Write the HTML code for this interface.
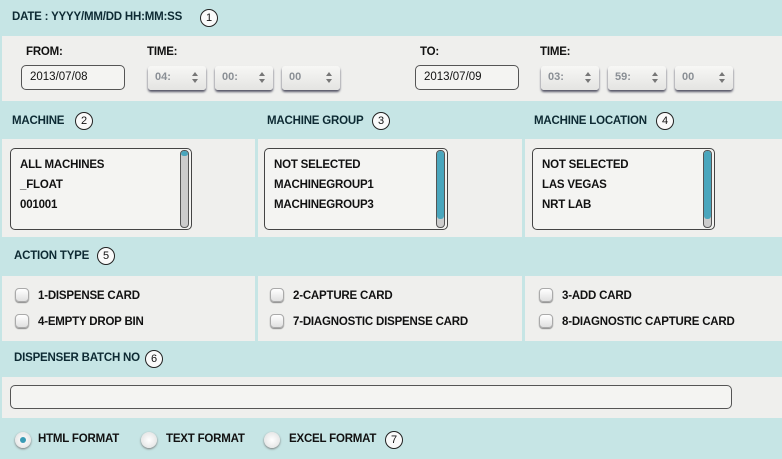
<!DOCTYPE html>
<html><head><style>
*{margin:0;padding:0;box-sizing:border-box}
body{width:782px;height:459px;background:#c6e5e5;position:relative;overflow:hidden;font-family:"Liberation Sans",sans-serif;color:#111}
.a{position:absolute}
.g{position:absolute;background:#efefed}
.h{position:absolute;font-weight:bold;font-size:11.5px;color:#0d2a33;white-space:nowrap;letter-spacing:-0.2px}
.c{position:absolute;width:18px;height:18px;border:1px solid #222;border-radius:50%;background:#fafafa;font-size:11px;text-align:center;line-height:16px;color:#111}
.l{position:absolute;font-weight:bold;font-size:11.5px;color:#111;white-space:nowrap;letter-spacing:-0.2px}
.in{position:absolute;border:1px solid #555;border-radius:5px;background:#f4f4f2;font-size:11.5px;padding-left:8px;line-height:22px}
.sp{position:absolute;width:58px;height:24px;border-radius:3px;background:linear-gradient(#f7f7f5,#e4e4e2);box-shadow:0 2px 2px #556;font-size:11px;font-weight:bold;color:#8a8f95;padding-left:7px;line-height:22px}
.sp:after{content:"";position:absolute;right:8px;top:6px;border:3px solid transparent;border-bottom:4px solid #777;border-top:0}
.sp:before{content:"";position:absolute;right:8px;top:13px;border:3px solid transparent;border-top:4px solid #777;border-bottom:0}
.lb{position:absolute;height:82px;border:1px solid #444;border-radius:5px;background:#f4f4f2;font-size:11.5px;font-weight:bold;padding:6px 0 0 9px;line-height:20px;letter-spacing:-0.2px}
.sb{position:absolute;right:2px;top:1px;width:9px;height:78px;border:1px solid #555;border-radius:4px;background:#ccc;overflow:hidden}
.sb i{position:absolute;left:0;top:0;width:100%;background:#4aa6bd;border-radius:3px}
.cb{position:absolute;width:14px;height:14px;border:1px solid #aaa;border-radius:4px;background:linear-gradient(#fff,#e0e0e0);box-shadow:0 1px 1px #888}
.rd{position:absolute;width:16px;height:16px;border-radius:50%;background:radial-gradient(#fff,#ddd);box-shadow:0 1px 2px #777}
</style></head><body>
<div class="h" style="left:12px;top:11px">DATE : YYYY/MM/DD HH:MM:SS</div><div class="c" style="left:200px;top:9px">1</div>
<div class="g" style="left:2px;top:36px;width:780px;height:65px"></div>
<div class="l" style="left:26px;top:46px">FROM:</div>
<div class="l" style="left:147px;top:46px">TIME:</div>
<div class="in" style="left:21px;top:65px;width:104px;height:25px">2013/07/08</div>
<div class="sp" style="left:148px;top:66px">04:</div>
<div class="sp" style="left:215px;top:66px">00:</div>
<div class="sp" style="left:282px;top:66px">00</div>
<div class="l" style="left:420px;top:46px">TO:</div>
<div class="l" style="left:540px;top:46px">TIME:</div>
<div class="in" style="left:415px;top:65px;width:104px;height:25px">2013/07/09</div>
<div class="sp" style="left:541px;top:66px">03:</div>
<div class="sp" style="left:608px;top:66px">59:</div>
<div class="sp" style="left:675px;top:66px">00</div>

<div class="h" style="left:12px;top:115px">MACHINE</div><div class="c" style="left:75px;top:112px">2</div>
<div class="h" style="left:267px;top:115px">MACHINE GROUP</div><div class="c" style="left:372px;top:112px">3</div>
<div class="h" style="left:534px;top:115px">MACHINE LOCATION</div><div class="c" style="left:656px;top:112px">4</div>
<div class="g" style="left:2px;top:139px;width:253px;height:98px"></div>
<div class="g" style="left:258px;top:139px;width:264px;height:98px"></div>
<div class="g" style="left:525px;top:139px;width:257px;height:98px"></div>
<div class="lb" style="left:10px;top:148px;width:182px">ALL MACHINES<br>_FLOAT<br>001001<div class="sb"><i style="height:5px"></i></div></div>
<div class="lb" style="left:264px;top:148px;width:184px">NOT SELECTED<br>MACHINEGROUP1<br>MACHINEGROUP3<div class="sb"><i style="height:68px"></i></div></div>
<div class="lb" style="left:532px;top:148px;width:183px">NOT SELECTED<br>LAS VEGAS<br>NRT LAB<div class="sb"><i style="height:68px"></i></div></div>

<div class="h" style="left:14px;top:250px">ACTION TYPE</div><div class="c" style="left:97px;top:247px">5</div>
<div class="g" style="left:2px;top:276px;width:253px;height:65px"></div>
<div class="g" style="left:258px;top:276px;width:264px;height:65px"></div>
<div class="g" style="left:525px;top:276px;width:257px;height:65px"></div>
<div class="cb" style="left:15px;top:288px"></div><div class="l" style="left:38px;top:290px">1-DISPENSE CARD</div>
<div class="cb" style="left:15px;top:314px"></div><div class="l" style="left:38px;top:316px">4-EMPTY DROP BIN</div>
<div class="cb" style="left:270px;top:288px"></div><div class="l" style="left:293px;top:290px">2-CAPTURE CARD</div>
<div class="cb" style="left:270px;top:314px"></div><div class="l" style="left:293px;top:316px">7-DIAGNOSTIC DISPENSE CARD</div>
<div class="cb" style="left:539px;top:288px"></div><div class="l" style="left:562px;top:290px">3-ADD CARD</div>
<div class="cb" style="left:539px;top:314px"></div><div class="l" style="left:562px;top:316px">8-DIAGNOSTIC CAPTURE CARD</div>

<div class="h" style="left:14px;top:352px">DISPENSER BATCH NO</div><div class="c" style="left:145px;top:350px">6</div>
<div class="g" style="left:2px;top:377px;width:780px;height:41px"></div>
<div class="in" style="left:10px;top:385px;width:722px;height:24px"></div>

<div class="rd" style="left:15px;top:432px"><i class="a" style="left:5px;top:5px;width:6px;height:6px;border-radius:50%;background:#3a9bb5"></i></div>
<div class="l" style="left:38px;top:433px">HTML FORMAT</div>
<div class="rd" style="left:141px;top:432px"></div><div class="l" style="left:166px;top:433px">TEXT FORMAT</div>
<div class="rd" style="left:264px;top:432px"></div><div class="l" style="left:289px;top:433px">EXCEL FORMAT</div>
<div class="c" style="left:385px;top:431px">7</div>
</body></html>
